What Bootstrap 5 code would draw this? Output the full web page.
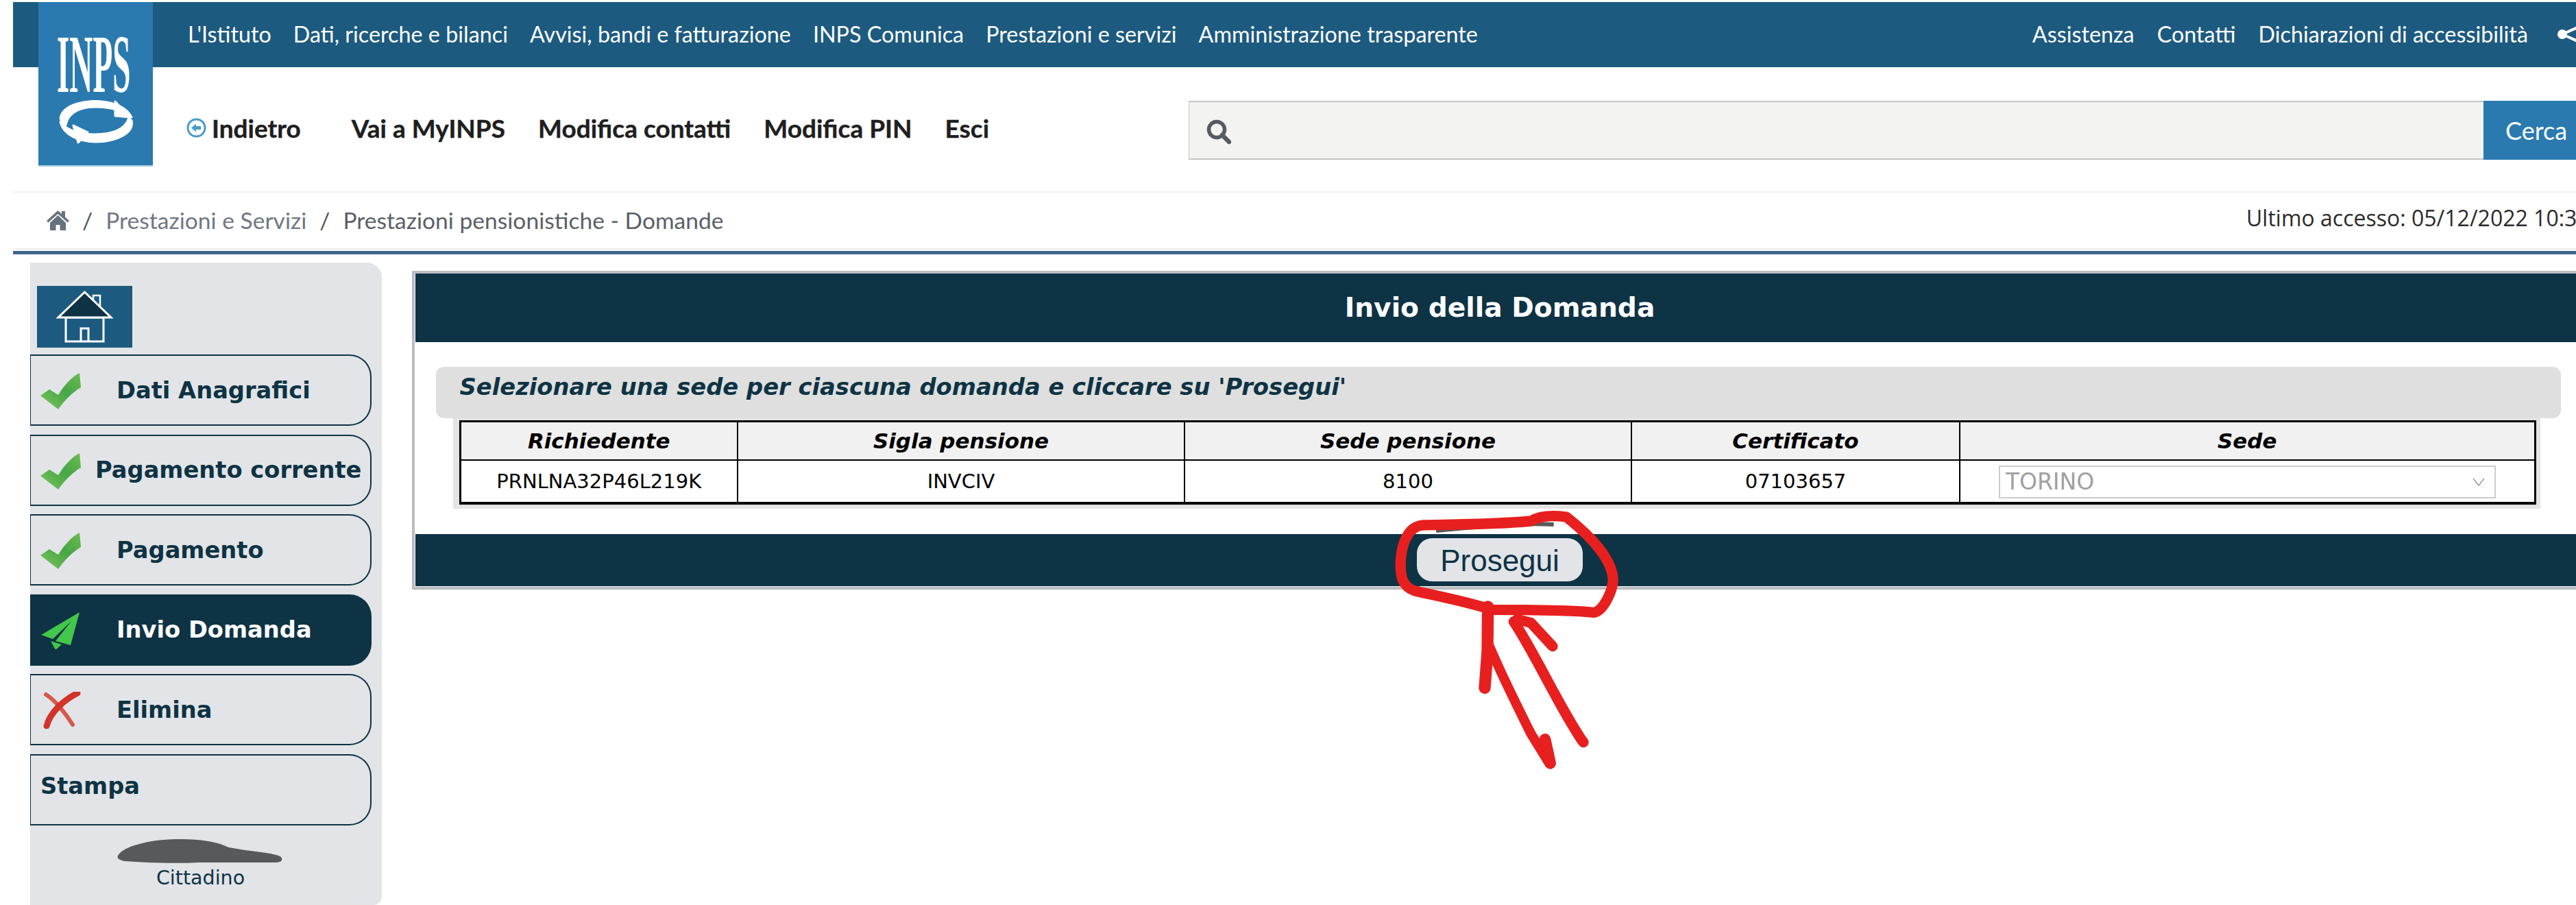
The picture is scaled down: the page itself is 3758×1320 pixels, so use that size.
<!DOCTYPE html>
<html lang="it">
<head>
<meta charset="utf-8">
<title>INPS - Invio della Domanda</title>
<link rel="stylesheet" href="https://cdn.jsdelivr.net/npm/bootstrap@5.3.0/dist/css/bootstrap.min.css">
<style>
html,body{margin:0;height:1320px;overflow:hidden;background:#fff}
body{font-family:"DejaVu Sans",sans-serif;position:relative}
.shell{width:3771px;margin-left:19px;padding-top:3px;position:relative}
.top-strip{height:95px;background:#1d5a80;padding-left:255px;padding-right:14px;font-family:"Lato",sans-serif;font-size:32.300px;color:#fff}
.top-strip a{color:#fff;text-decoration:none}
.strip-links{gap:32px}
.strip-right{gap:33px}
.share-ico{width:45px;height:36px;margin-left:10px;margin-top:-2px}
.inps-logo{position:absolute;left:37px;top:3px;width:167px;height:240px;background:#2a7ab0;border-bottom:2px solid #a9cfe6;color:#fff;overflow:hidden}
.inps-word{position:absolute;left:27px;top:30px;width:290px;font-family:"Liberation Serif",serif;font-weight:700;font-size:121px;line-height:121px;transform:scaleX(.39);transform-origin:0 0}
.inps-swirl{position:absolute;left:30px;top:143px}
.tool-row{height:181px;padding-left:253px}
.tool-links{font-family:"Lato",sans-serif;font-weight:700;font-size:37px;color:#1f1f1f;margin-top:-4px;-webkit-text-stroke:.4px #1f1f1f}
.tool-links a{color:#1f1f1f;text-decoration:none}
.back-link{margin-right:74px}
.back-ico{width:29px;height:29px;margin-right:8px}
.tool-gap{gap:48px}
.finder{width:2056px;height:86px;margin-top:3px;flex-wrap:nowrap}
.finder .input-group-text{background:#f3f3f1;border:solid #c5c5c5;border-width:2px 0 2px 1px;border-radius:0;padding:4px 0 0 24px}
.finder .form-control{background:#f3f3f1;border:solid #c5c5c5;border-width:2px 0;border-radius:0;box-shadow:none}
.finder .btn{background:#2a7ab0;border:0;border-radius:0;color:#fff;font-family:"Lato",sans-serif;font-size:36px;width:167px;padding:0 0 0 32px;text-align:left}
.crumb-row{height:85px;border-top:2px solid #f0f0f0;border-bottom:2px solid #eeeeee;padding-left:49px}
.crumb-row .breadcrumb{--bs-breadcrumb-item-padding-x:19px;--bs-breadcrumb-divider-color:#555;font-family:"Lato",sans-serif;font-size:33.600px;margin:0;padding-top:0}
.crumb-row .breadcrumb-item a{color:#6d7884;text-decoration:none}
.crumb-row .breadcrumb-item.active{color:#5a6068}
.crumb-home{width:33px;height:33px;vertical-align:-3px}
.last-access{width:513px;font-family:"Open Sans",sans-serif;font-size:32px;color:#2c2c2c;white-space:nowrap;margin-top:-8px}
.blue-rule{height:5px;background:#41668c;margin-top:2px}
.work-area{margin-top:12px;padding-left:25px}
.side-rail{width:513px;height:937px;flex:none;background:#e2e4e7;border-radius:0 22px 12px 0;padding-top:34px}
.rail-home{width:139px;height:90px;background:#1d5a80;margin-left:10px;margin-bottom:10px;display:block}
.rail-item{width:498px;height:104px;border:2px solid #0e3344;border-left-width:1px;border-radius:0 32px 32px 0;margin-bottom:12.500px;color:#0e3344;font-weight:700;font-size:33.700px;padding:2px 0 0 14px;white-space:nowrap}
.rail-item.is-current{background:#0e3344;color:#fff}
.rail-ico{width:59px;height:54px;flex:none;margin-right:52px}
.rail-ico.tight{margin-right:21px}
.rail-plain{align-items:flex-start!important;padding-top:20px}
.citizen{text-align:center;font-size:28.500px;line-height:34px;color:#0e3344;position:relative;padding:48px 16px 0 0}
.name-blur{position:absolute;left:126px;top:8px;width:244px;height:36px}
.form-panel{width:3175px;margin-left:43.500px;margin-top:12px;height:465px;border:4px solid #bcbcbf;padding:0 1px;flex:none;align-self:flex-start;background:#fff}
.panel-head{height:100px;background:#0e3344;color:#fff;font-weight:700;font-size:39.200px}
.panel-note{margin:36px 0 0 30px;width:3100px;height:75px;background:#dfdfdf;border-radius:12px;color:#0e3344;font-weight:700;font-style:italic;font-size:33.750px;padding:6px 0 0 35px;line-height:48px;position:relative}
.table-wrap{margin-left:55px;width:3045px;background:#e4e4e4;padding:3px 6px 6px 9px}
.sede-table{width:3030px;table-layout:fixed;margin:0;border-collapse:collapse;border:3px solid #000;border-bottom-width:4px;color:#000;--bs-table-bg:#fff}
.sede-table th,.sede-table td{border:2px solid #000;text-align:center;vertical-align:middle;padding:0;white-space:nowrap}
.sede-table th{height:56px;background:#f1f1f1;font-size:31px;font-style:italic;font-weight:700;box-shadow:none}
.sede-table td{height:63px;font-size:29px;box-shadow:none;padding-top:2px}
.col-a{width:405px}.col-b,.col-c{width:652px}.col-d{width:479px}
.sede-select{width:725px;height:48px;margin:0 auto;padding:0 0 0 8px;border:2px solid #ccc;border-radius:0;font-size:33px;line-height:44px;color:#a0a0a0;background-color:#fff!important;background-size:18px 14px;background-position:right 14px center;background-image:url("data:image/svg+xml,%3Csvg xmlns='http://www.w3.org/2000/svg' viewBox='0 0 18 14'%3E%3Cpath d='M1 2l8 10 8-10' fill='none' stroke='%23999' stroke-width='1.5'/%3E%3C/svg%3E")}
.panel-foot{height:76px;margin-top:37px;background:#0e3344}
.go-btn{width:242px;height:63px;background:#e2e4e7;border:0;border-radius:22px;color:#0e3344;font-family:"Liberation Sans",sans-serif;font-size:44px;line-height:1;padding:2px 0 0}
.scribble{position:absolute;left:1950px;top:730px;width:500px;height:420px;pointer-events:none}
</style>
</head>
<body>
<div class="shell">
  <header>
    <div class="top-strip d-flex align-items-center">
      <nav class="strip-links d-flex">
        <a href="#">L'Istituto</a><a href="#">Dati, ricerche e bilanci</a><a href="#">Avvisi, bandi e fatturazione</a><a href="#">INPS Comunica</a><a href="#">Prestazioni e servizi</a><a href="#">Amministrazione trasparente</a>
      </nav>
      <nav class="strip-right d-flex align-items-center ms-auto">
        <a href="#">Assistenza</a><a href="#">Contatti</a><a href="#">Dichiarazioni di accessibilità</a>
        <svg class="share-ico" viewBox="0 0 45 36"><g fill="#fff"><circle cx="7" cy="18" r="7"/><circle cx="36" cy="5" r="7"/><circle cx="36" cy="31" r="7"/></g><path d="M7 18L36 5M7 18l29 13" stroke="#fff" stroke-width="4"/></svg>
      </nav>
    </div>
    <div class="inps-logo">
      <span class="inps-word">INPS</span>
      <svg class="inps-swirl" width="110" height="64" viewBox="0 0 110 64">
        <g fill="#fff" stroke="#fff" stroke-width="3" stroke-linejoin="round">
          <path d="M2 26C6 6 40-2 70 3c16 3 30 10 36 22-14-10-32-15-52-15C34 10 14 16 10 36 5 33 2 30 2 26z"/>
          <path d="M106 30c4 18-22 31-52 31C28 61 6 50 2 32c10 12 28 18 50 18 24 0 44-6 50-24z"/>
          <path d="M82 2l22 23-22-2zM28 62L21 37l21 10z"/>
        </g>
      </svg>
    </div>
    <div class="tool-row d-flex align-items-center justify-content-between">
      <div class="tool-links d-flex align-items-center">
        <a href="#" class="back-link d-flex align-items-center">
          <svg class="back-ico" viewBox="0 0 29 29"><circle cx="14.500" cy="14.500" r="12.500" fill="none" stroke="#4a9ccb" stroke-width="3"/><path d="M7 14.500l7-6v3.500h7v5h-7v3.500z" fill="#4a9ccb"/></svg>Indietro</a>
        <div class="tool-gap d-flex"><a href="#">Vai a MyINPS</a><a href="#">Modifica contatti</a><a href="#">Modifica PIN</a><a href="#">Esci</a></div>
      </div>
      <form class="finder input-group">
        <span class="input-group-text"><svg width="38" height="38" viewBox="0 0 38 38"><circle cx="16" cy="16" r="11.500" fill="none" stroke="#555b60" stroke-width="5.500"/><path d="M24 24l10 10" stroke="#555b60" stroke-width="6.500" stroke-linecap="round"/></svg></span>
        <input class="form-control" type="text" aria-label="Cerca">
        <button class="btn" type="button">Cerca</button>
      </form>
    </div>
    <div class="crumb-row d-flex align-items-center justify-content-between">
      <ol class="breadcrumb align-items-center">
        <li class="breadcrumb-item"><svg class="crumb-home" viewBox="0 0 33 33"><path d="M16.500 3L0 18l2.500 2.500L16.500 8l14 12.500L33 18l-6-5.500V4h-5v4zM5 21v11h8.500v-8h6v8H28V21L16.500 10z" fill="#67727d"/></svg></li>
        <li class="breadcrumb-item"><a href="#">Prestazioni e Servizi</a></li>
        <li class="breadcrumb-item active">Prestazioni pensionistiche - Domande</li>
      </ol>
      <div class="last-access">Ultimo accesso: 05/12/2022 10:35</div>
    </div>
    <div class="blue-rule"></div>
  </header>
  <main class="work-area d-flex">
    <aside class="side-rail">
      <a class="rail-home" href="#" aria-label="Home">
        <svg width="139" height="90" viewBox="0 0 139 90"><path d="M82 33V14h10v28z" fill="#1d5a80" stroke="#fff" stroke-width="2.500"/><path d="M42 46h55v35H42z" fill="#1d5a80" stroke="#fff" stroke-width="3"/><path d="M64 81V62h11v19" fill="none" stroke="#fff" stroke-width="3"/><path d="M69.500 9L31 46h77z" fill="#0e3344" stroke="#fff" stroke-width="3"/></svg>
      </a>
      <svg width="0" height="0" class="d-block"><defs><linearGradient id="okg" x1="0" y1="1" x2="1" y2="0"><stop offset="0" stop-color="#7dc65a"/><stop offset=".55" stop-color="#47a647"/><stop offset="1" stop-color="#6cbc4d"/></linearGradient><symbol id="ok" viewBox="0 0 59 54"><path d="M0 34L13 25 26 33C34 20 45 7 57 1L59 22C47 29 35 41 26 54z" fill="url(#okg)"/></symbol></defs></svg>
      <div class="rail-item d-flex align-items-center"><svg class="rail-ico"><use href="#ok"/></svg>Dati Anagrafici</div>
      <div class="rail-item d-flex align-items-center"><svg class="rail-ico tight"><use href="#ok"/></svg>Pagamento corrente</div>
      <div class="rail-item d-flex align-items-center"><svg class="rail-ico"><use href="#ok"/></svg>Pagamento</div>
      <div class="rail-item is-current d-flex align-items-center"><svg class="rail-ico" viewBox="0 0 59 54"><path d="M57 0L1 33l17 6L45 13 22 42l22 6zM15 42l16 5-9 8z" fill="#43c74a"/></svg>Invio Domanda</div>
      <div class="rail-item d-flex align-items-center"><svg class="rail-ico" viewBox="0 0 59 54"><path d="M8 4C24 14 38 34 47 48" fill="none" stroke="#d8564b" stroke-width="6" stroke-linecap="round"/><path d="M54 2C34 12 14 30 9 50" fill="none" stroke="#d2332a" stroke-width="9" stroke-linecap="round"/></svg>Elimina</div>
      <div class="rail-item rail-plain d-flex align-items-center">Stampa</div>
      <div class="citizen"><svg class="name-blur" viewBox="0 0 244 36"><path d="M2 24C10 10 50 0 90 0c44 0 60 6 74 12 30 6 70 8 76 14 4 6-2 8-10 8H120C80 36 40 34 12 32 4 30 0 28 2 24z" fill="#58595b"/></svg>Cittadino</div>
    </aside>
    <section class="form-panel">
      <div class="panel-head d-flex align-items-center justify-content-center">Invio della Domanda</div>
      <div class="panel-note">Selezionare una sede per ciascuna domanda e cliccare su 'Prosegui'</div>
      <div class="table-wrap">
        <table class="sede-table table">
          <colgroup><col class="col-a"><col class="col-b"><col class="col-c"><col class="col-d"><col></colgroup>
          <thead><tr><th>Richiedente</th><th>Sigla pensione</th><th>Sede pensione</th><th>Certificato</th><th>Sede</th></tr></thead>
          <tbody><tr><td>PRNLNA32P46L219K</td><td>INVCIV</td><td>8100</td><td>07103657</td><td><select class="form-select sede-select" disabled aria-label="Sede"><option>TORINO</option></select></td></tr></tbody>
        </table>
      </div>
      <div class="panel-foot d-flex align-items-center justify-content-center"><button class="btn go-btn" type="button">Prosegui</button></div>
    </section>
  </main>
</div>
<svg class="scribble" viewBox="0 0 1500 1260" aria-hidden="true">
  <path d="M435 132C600 118 780 95 950 105" fill="none" stroke="#58595b" stroke-width="18"/>
  <g fill="none" stroke="#e81f1f" stroke-linecap="round" stroke-linejoin="round">
    <path d="M1005 72C930 62 880 72 850 90 700 105 500 105 375 108 315 115 285 180 280 265 278 330 285 375 340 395 450 420 560 440 680 478 800 478 1000 478 1125 490 1165 485 1208 400 1210 345 1205 265 1130 170 1005 72Z" stroke-width="46"/>
    <path d="M662 465L660 660 648 820" stroke-width="52"/>
    <path d="M670 640C720 760 790 900 850 1020L930 1150" stroke-width="42"/>
    <path d="M912 1045L935 1150" stroke-width="50"/>
    <path d="M775 530C850 640 950 850 1030 980 1055 1020 1065 1040 1080 1058" stroke-width="46"/>
    <path d="M790 520L850 535 945 638" stroke-width="46"/>
  </g>
</svg>
<script src="https://cdn.jsdelivr.net/npm/bootstrap@5.3.0/dist/js/bootstrap.bundle.min.js"></script>
</body>
</html>
